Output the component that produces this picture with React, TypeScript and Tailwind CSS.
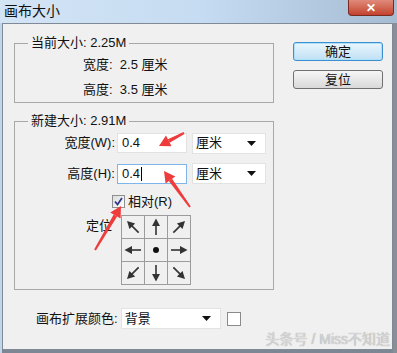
import React from "react";

const font = { fontFamily: '"Liberation Sans", "Noto Sans CJK SC", sans-serif' };

function Caret() {
    return (
        <svg width="9" height="5" viewBox="0 0 9 5" className="shrink-0">
            <path d="M0 0 H9 L4.5 5 Z" fill="#111" />
        </svg>
    );
}

function Select({ label, className }: { label: string; className: string }) {
    return (
        <div className={`flex items-center justify-between bg-white border border-[#e3e3e3] pl-[3px] pr-[9px] ${className}`}>
            <span>{label}</span>
            <Caret />
        </div>
    );
}

// arrow pointing from cell center outward, angle in degrees (0 = up)
function Arrow({ angle }: { angle: number }) {
    return (
        <svg width="22" height="22" viewBox="0 0 22 22">
            <g transform={`rotate(${angle} 11 11)`}>
                <line x1="11" y1="19" x2="11" y2="8" stroke="#333" strokeWidth="1.6" />
                <path d="M11 2.5 L7 10 H15 Z" fill="#333" />
            </g>
        </svg>
    );
}

function AnchorGrid() {
    const cells = [-45, 0, 45, -90, null, 90, -135, 180, 135];
    return (
        <div className="grid grid-cols-[repeat(3,22px)] grid-rows-[repeat(3,22px)] gap-px bg-[#9c9c9c] border border-[#9c9c9c] w-fit">
            {cells.map((a, i) => (
                <div key={i} className="bg-[#f0f0f0] flex items-center justify-center">
                    {a === null ? <div className="w-[6px] h-[6px] rounded-full bg-[#111]" /> : <Arrow angle={a} />}
                </div>
            ))}
        </div>
    );
}

function RedArrow({ x1, y1, x2, y2 }: { x1: number; y1: number; x2: number; y2: number }) {
    const dx = x2 - x1;
    const dy = y2 - y1;
    const len = Math.hypot(dx, dy);
    const ux = dx / len;
    const uy = dy / len;
    const bx = x2 - ux * 11;
    const by = y2 - uy * 11;
    return (
        <g>
            <path d={`M${x1 + uy * 1} ${y1 - ux * 1} L${bx + uy * 2} ${by - ux * 2} L${bx - uy * 2} ${by + ux * 2} L${x1 - uy * 1} ${y1 + ux * 1} Z`} fill="#ee3b3b" />
            <path d={`M${x2} ${y2} L${bx + uy * 6} ${by - ux * 6} L${bx - uy * 6} ${by + ux * 6} Z`} fill="#ee3b3b" />
        </g>
    );
}

export default function App() {
    return (
        <div className="relative w-[397px] h-[353px] overflow-hidden bg-[#7d8794] text-[13px] text-[#111]" style={font}>
            {/* title bar */}
            <div className="h-[23px] flex items-center pl-[4px] bg-gradient-to-r from-[#d3e4f5] via-[#c6dcf2] to-[#a6bcd3] text-[14px]">
                画布大小
            </div>
            <div className="absolute top-0 right-[3px] w-[46px] h-[16px] rounded-b-[4px] bg-gradient-to-b from-[#e08a7a] to-[#c2412c] border border-[#7a2a20] border-t-0 flex items-center justify-center text-white text-[12px] font-bold">
                ✕
            </div>

            <div className="flex h-[330px]">
                <div className="w-[2px] bg-[#c2d6eb]" />
                {/* client area */}
                <div className="w-[391px] h-[327px] bg-[#f0f0f0] border border-[#7f8a96] flex flex-col">
                    <div className="flex pt-[11px] pl-[11px]">
                        {/* left column */}
                        <div className="flex flex-col w-[260px]">
                            <fieldset className="border border-[#a8a8a8] h-[68px] px-0">
                                <legend className="ml-[13px] px-[3px] leading-[16px]">当前大小: 2.25M</legend>
                                <div className="pl-[68px] pt-[6px] flex flex-col gap-[9px] leading-[16px]">
                                    <span>宽度:&nbsp; 2.5 厘米</span>
                                    <span>高度:&nbsp; 3.5 厘米</span>
                                </div>
                            </fieldset>

                            <fieldset className="border border-[#a8a8a8] h-[177px] mt-[10px] px-0">
                                <legend className="ml-[13px] px-[3px] leading-[16px]">新建大小: 2.91M</legend>
                                <div className="flex flex-col pt-[4px]">
                                    <div className="flex items-center h-[20px]">
                                        <span className="w-[100px] text-right">宽度(W):</span>
                                        <div className="ml-[2px] w-[70px] h-[20px] bg-white border border-[#e2e2e2] flex items-center pl-[4px]">0.4</div>
                                        <Select label="厘米" className="ml-[5px] w-[74px] h-[21px]" />
                                    </div>
                                    <div className="flex items-center h-[21px] mt-[10px]">
                                        <span className="w-[100px] text-right">高度(H):</span>
                                        <div className="ml-[2px] w-[70px] h-[20px] bg-white border border-[#7eb4ea] flex items-center pl-[4px]">
                                            0.4<span className="inline-block w-px h-[14px] bg-black ml-px" />
                                        </div>
                                        <Select label="厘米" className="ml-[5px] w-[74px] h-[21px]" />
                                    </div>
                                    <div className="flex items-center mt-[8px] pl-[97px] gap-[3px]">
                                        <div className="w-[13px] h-[13px] border border-[#8f8f8f] bg-gradient-to-br from-[#dcdcdc] to-white flex items-center justify-center">
                                            <svg width="9" height="9" viewBox="0 0 9 9">
                                                <path d="M1 4.5 L3.5 7.5 L8 1" stroke="#2d3a8c" strokeWidth="1.8" fill="none" />
                                            </svg>
                                        </div>
                                        <span>相对(R)</span>
                                    </div>
                                    <div className="flex mt-[3px] pl-[71px]">
                                        <span className="w-[35px] pt-[1px]">定位</span>
                                        <AnchorGrid />
                                    </div>
                                </div>
                            </fieldset>
                        </div>

                        {/* buttons */}
                        <div className="flex flex-col ml-[19px] pt-[7px] gap-[9px]">
                            <button className="w-[90px] h-[19px] rounded-[3px] border border-[#3c8fd0] bg-gradient-to-b from-[#eaf6fd] to-[#bfe0f5] shadow-[inset_0_0_0_1px_#aee0f8] leading-none">
                                确定
                            </button>
                            <button className="w-[90px] h-[19px] rounded-[3px] border border-[#707070] bg-gradient-to-b from-[#f6f6f6] to-[#d9d9d9] leading-none">
                                复位
                            </button>
                        </div>
                    </div>

                    {/* bottom row */}
                    <div className="flex items-center mt-[18px] pl-[33px]">
                        <span>画布扩展颜色:</span>
                        <Select label="背景" className="ml-[3px] w-[100px] h-[21px]" />
                        <div className="ml-[6px] w-[14px] h-[14px] bg-white border border-[#8a8a8a]" />
                    </div>
                </div>
                <div className="w-[4px] bg-[#8a8f96]" />
            </div>

            <div className="absolute right-[7px] bottom-[3px] text-[14px] text-[#d6d6d6]" style={{ textShadow: "0 0 1px #999" }}>
                头条号 / Miss不知道
            </div>

            {/* red annotation arrows */}
            <svg className="absolute inset-0 pointer-events-none" width="397" height="353">
                <RedArrow x1={184} y1={133} x2={159} y2={146} />
                <RedArrow x1={190} y1={207} x2={164} y2={171} />
                <RedArrow x1={95} y1={250} x2={121} y2={206} />
            </svg>
        </div>
    );
}
